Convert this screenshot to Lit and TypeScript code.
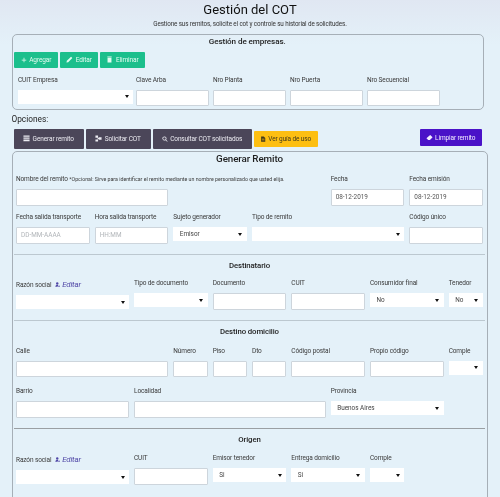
import { LitElement, html, css, svg } from "lit";
import { customElement } from "lit/decorators.js";

const ic = (body: unknown, w = 7, vb = "0 0 16 16") =>
  html`<svg class="ic" width=${w} height=${w} viewBox=${vb} fill="currentColor" aria-hidden="true">${body}</svg>`;

const plus = () => ic(svg`<path d="M7 2h2v5h5v2H9v5H7V9H2V7h5z"/>`, 6);
const pencil = () => ic(svg`<path d="M11.500 1.500l3 3-9.500 9.500-4 1 1-4z"/>`);
const trash = () => ic(svg`<path d="M3 1h10v2H3zM3.500 4h9v11h-9z"/>`);
const bars = () => ic(svg`<path d="M1 1h14v3H1zM1 5.500h14v3H1zM1 10h14v4H1z"/>`, 7);
const nodes = () => ic(svg`<path d="M1 1h6v5H1zM1 10h6v5H1zM9 5h6v6H9zM6 6.500h3v3H6z"/>`, 7);
const search = () => ic(svg`<path fill-rule="evenodd" d="M6.500 1a5.500 5.500 0 014.400 8.800l4 4-1.200 1.200-4-4A5.500 5.500 0 116.500 1zm0 2a3.500 3.500 0 100 7 3.500 3.500 0 000-7z"/>`, 6);
const file = () => ic(svg`<path fill-rule="evenodd" d="M3 1h7l4 4v10H3zM5 7v1.500h7V7zm0 3v1.500h7V10z"/>`, 6);
const eraser = () => ic(svg`<path d="M9.500 2L15 7.500 9 13.500H5L1 9.500z"/>`);
const userEdit = () => ic(svg`<circle cx="6.500" cy="4.500" r="3.500"/><path d="M1 14c0-3 2-5 5-5s3 .5 4 1l-3 4zM9 14l4-4 2 2-4 3z"/>`, 5.5);

type Cell = { label?: string; span: number; kind?: "input" | "select"; value?: string; ph?: string };

const field = (c: Cell) => html`
  <div class="field" style="grid-column: span ${c.span}">
    <label>${c.label}</label>
    ${c.kind === "select"
      ? html`<span class="sel"><select><option>${c.value ?? ""}</option></select></span>`
      : html`<input .value=${c.value ?? ""} placeholder=${c.ph ?? ""} />`}
  </div>`;

const razon = () => html`
  <div class="field razon" style="grid-column: span 3">
    <label>Razón social <a class="edit">${userEdit()} Editar</a></label>
    <span class="sel"><select><option></option></select></span>
  </div>`;

@customElement("app-root")
export class AppRoot extends LitElement {
  static styles = css`
    :host {
      display: block;
      width: 500px;
      height: 497px;
      overflow: hidden;
      background: linear-gradient(#e0e7f2, #e4f1f9 45px);
      font-family: Roboto, "Liberation Sans", sans-serif;
      color: #333;
      filter: blur(0.2px);
    }
    * { box-sizing: border-box; }
    .ic { flex: none; }
    h1 {
      margin: 0;
      padding-top: 2px;
      height: 19px;
      font-size: 13px;
      line-height: 15px;
      font-weight: 400;
      color: #111;
      text-align: center;
    }
    .sub {
      height: 12px;
      line-height: 11px;
      font-size: 6.300px;
      letter-spacing: -0.120px;
      text-align: center;
      color: #333;
    }
    .panel {
      border: 1px solid #a6afb7;
      border-radius: 5px;
    }
    .emp {
      margin: 3px 16.500px 0 11.500px;
      height: 75.500px;
      padding: 1px 2px 0 1.500px;
    }
    h2 {
      margin: 0;
      text-align: center;
      font-weight: 500;
      color: #1e1e1e;
    }
    .emp h2 { font-size: 8.100px; letter-spacing: -0.100px; line-height: 11px; height: 15.500px; }
    .gbtns { display: flex; gap: 2px; }
    .gbtns button {
      height: 16.500px;
      background: #1cbf8c;
      color: #e4fbf1;
      border: 0;
      border-radius: 1px;
    }
    button {
      display: flex;
      align-items: center;
      justify-content: center;
      gap: 2.500px;
      padding: 0;
      font: 400 6.500px Roboto, sans-serif;
      letter-spacing: -0.120px;
    }
    .empgrid {
      display: grid;
      grid-template-columns: 114px 73px 73px 73px 73px;
      column-gap: 4px;
      margin-top: 6.500px;
      padding-left: 4px;
    }
    .empgrid .field:first-child .sel { width: 115px; }
    .field { display: flex; flex-direction: column; min-width: 0; }
    label {
      display: block;
      height: 10px;
      line-height: 10px;
      font-size: 6.500px;
      letter-spacing: -0.120px;
      color: #3a3a3a;
      white-space: nowrap;
    }
    input {
      display: block;
      width: 100%;
      height: 16.500px;
      margin: 5px 0 0;
      padding: 0 4px;
      background: #fff;
      border: 1px solid #cdd5dc;
      border-radius: 1px;
      font: 400 6.400px Roboto, sans-serif;
      color: #555;
      outline: 0;
    }
    input::placeholder { color: #b0b4b8; opacity: 1; }
    .sel {
      position: relative;
      display: block;
      height: 14px;
      margin-top: 5px;
      background: #fff;
    }
    .sel select {
      appearance: none;
      -webkit-appearance: none;
      display: block;
      width: 100%;
      height: 100%;
      padding: 0 0 0 6.500px;
      background: transparent;
      border: 0;
      border-radius: 0;
      font: 400 6.400px Roboto, sans-serif;
      color: #444;
      outline: 0;
    }
    .sel::after {
      content: "";
      position: absolute;
      right: 4.500px;
      top: 5.500px;
      border-left: 2px solid transparent;
      border-right: 2px solid transparent;
      border-top: 3.200px solid #111;
    }
    .opt-title {
      margin: 3.500px 0 0 11.500px;
      height: 12px;
      line-height: 12px;
      font-size: 8.300px;
      color: #1e1e1e;
    }
    .opts {
      display: flex;
      align-items: flex-start;
      gap: 2px;
      margin: 4px 0 0 13.500px;
      height: 22px;
    }
    .opts button {
      height: 19.500px;
      background: #4b4659;
      color: #ececf2;
      border: 0;
      border-radius: 1px;
    }
    .opts .guide {
      width: 64px;
      height: 16.500px;
      margin-top: 1.500px;
      background: #fdbf12;
      color: #40391c;
    }
    .opts .clear {
      width: 62px;
      height: 17px;
      margin-left: 100px;
      background: #4a12c8;
      color: #f2edff;
    }
    .rem {
      margin-left: 11.500px;
      width: 476.500px;
      height: 360px;
      padding: 1px 4px 0 3.500px;
    }
    .rem h2 { font-size: 9.800px; letter-spacing: -0.100px; line-height: 12px; height: 21px; }
    .grid {
      display: grid;
      grid-template-columns: repeat(12, minmax(0, 1fr));
      column-gap: 5px;
      row-gap: 6.500px;
      align-items: start;
    }
    .grid.tall { row-gap: 8.700px; }
    label small { font-size: 5.250px; letter-spacing: 0; color: #3a3a3a; }
    hr {
      margin: 10.500px -1.500px 0 -2px;
      border: 0;
      border-top: 1.300px solid #bcc8d0;
    }
    hr.dark { border-top-color: #9a9fa3; margin-top: 10px; }
    .rem h2.sect { font-size: 7.800px; line-height: 11px; height: 13px; }
    .razon label { position: relative; top: 1.700px; }
    .razon .sel { margin-top: 7px; }
    .edit {
      font-size: 7.800px;
      font-style: italic;
      color: #4f46a6;
      margin-left: 2px;
    }
    .edit .ic { vertical-align: -0.500px; }
  `;

  render() {
    const e = (label: string): Cell => ({ label, span: 1 });
    return html`
      <h1>Gestión del COT</h1>
      <div class="sub">Gestione sus remitos, solicite el cot y controle su historial de solicitudes.</div>

      <section class="panel emp">
        <h2>Gestión de empresas.</h2>
        <div class="gbtns">
          <button style="width:44px">${plus()} Agregar</button>
          <button style="width:38px">${pencil()} Editar</button>
          <button style="width:45px">${trash()} Eliminar</button>
        </div>
        <div class="empgrid">
          ${field({ label: "CUIT Empresa", span: 1, kind: "select" })}
          ${field(e("Clave Arba"))}${field(e("Nro Planta"))}${field(e("Nro Puerta"))}${field(e("Nro Secuencial"))}
        </div>
      </section>

      <div class="opt-title">Opciones:</div>
      <div class="opts">
        <button style="width:70px">${bars()} Generar remito</button>
        <button style="width:65px">${nodes()} Solicitar COT</button>
        <button style="width:99px">${search()} Consultar COT solicitados</button>
        <button class="guide">${file()} Ver guía de uso</button>
        <button class="clear">${eraser()} Limpiar remito</button>
      </div>

      <section class="panel rem">
        <h2>Generar Remito</h2>
        <div class="grid">
          <div class="field" style="grid-column: span 8">
            <label>Nombre del remito <small>*Opcional: Sirve para identificar el remito mediante un nombre personalizado que usted elija.</small></label>
            <input style="width:152.300px" />
          </div>
          ${field({ label: "Fecha", span: 2, value: "08-12-2019" })}
          ${field({ label: "Fecha emisión", span: 2, value: "08-12-2019" })}
          ${field({ label: "Fecha salida transporte", span: 2, ph: "DD-MM-AAAA" })}
          ${field({ label: "Hora salida transporte", span: 2, ph: "HH:MM" })}
          ${field({ label: "Sujeto generador", span: 2, kind: "select", value: "Emisor" })}
          ${field({ label: "Tipo de remito", span: 4, kind: "select" })}
          ${field({ label: "Código único", span: 2 })}
        </div>

        <hr />
        <h2 class="sect" style="margin-top:4.500px">Destinatario</h2>
        <div class="grid" style="margin-top:5.700px">
          ${razon()}
          ${field({ label: "Tipo de documento", span: 2, kind: "select" })}
          ${field({ label: "Documento", span: 2 })}
          ${field({ label: "CUIT", span: 2 })}
          ${field({ label: "Consumidor final", span: 2, kind: "select", value: "No" })}
          ${field({ label: "Tenedor", span: 1, kind: "select", value: "No" })}
        </div>

        <hr />
        <h2 class="sect" style="margin-top:5.200px">Destino domicilio</h2>
        <div class="grid tall" style="margin-top:6.500px">
          ${field({ label: "Calle", span: 4 })}
          ${field({ label: "Número", span: 1 })}
          ${field({ label: "Piso", span: 1 })}
          ${field({ label: "Dto", span: 1 })}
          ${field({ label: "Código postal", span: 2 })}
          ${field({ label: "Propio código", span: 2 })}
          ${field({ label: "Comple", span: 1, kind: "select" })}
          ${field({ label: "Barrio", span: 3 })}
          ${field({ label: "Localidad", span: 5 })}
          ${field({ label: "Provincia", span: 3, kind: "select", value: "Buenos Aires" })}
        </div>

        <hr class="dark" />
        <h2 class="sect" style="margin-top:5.700px">Origen</h2>
        <div class="grid" style="margin-top:6px">
          ${razon()}
          ${field({ label: "CUIT", span: 2 })}
          ${field({ label: "Emisor tenedor", span: 2, kind: "select", value: "Si" })}
          ${field({ label: "Entrega domicilio", span: 2, kind: "select", value: "Si" })}
          ${field({ label: "Comple", span: 1, kind: "select" })}
        </div>
      </section>
    `;
  }
}
